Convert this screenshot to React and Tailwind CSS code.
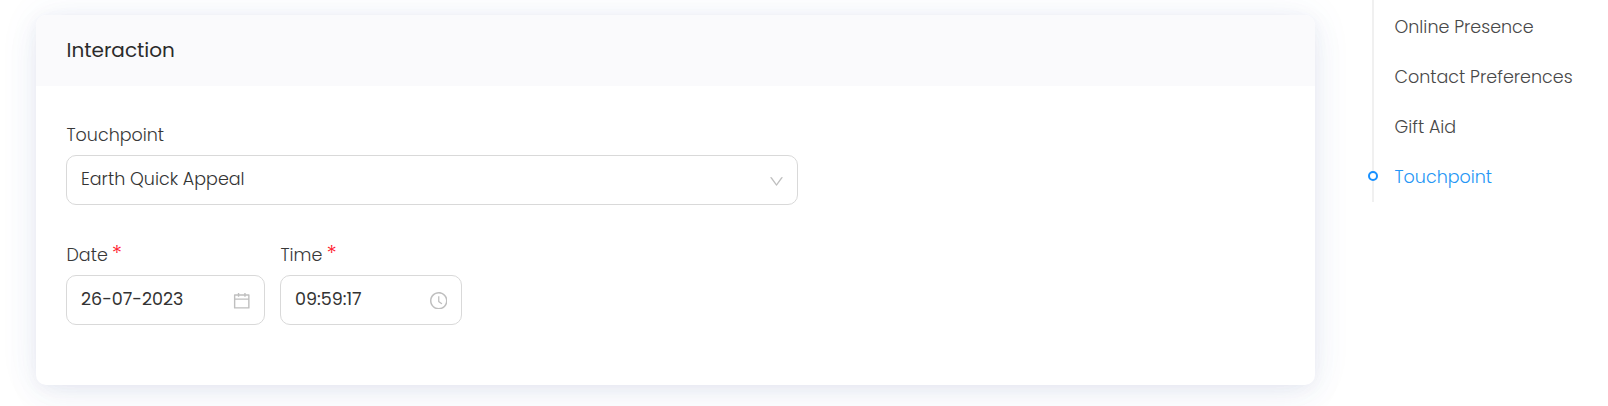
const links = [
  { label: 'Online Presence' },
  { label: 'Contact Preferences' },
  { label: 'Gift Aid' },
  { label: 'Touchpoint', active: true },
];

function DownIcon() {
  return (
    <svg className="h-[15px] w-[15px] text-[#bfbfbf]" viewBox="64 64 896 896" fill="currentColor">
      <path d="M884 256h-75c-5.100 0-9.900 2.500-12.900 6.600L512 654.200 227.900 262.600c-3-4.100-7.800-6.600-12.900-6.600h-75c-6.500 0-10.300 7.400-6.500 12.700l352.600 486.100c12.800 17.600 39 17.600 51.700 0l352.600-486.100c3.900-5.300.1-12.700-6.400-12.700z" />
    </svg>
  );
}

function CalendarIcon() {
  return (
    <svg className="h-[17.500px] w-[17.500px] text-[#bfbfbf]" viewBox="64 64 896 896" fill="currentColor">
      <path d="M880 184H712v-64c0-4.400-3.600-8-8-8h-56c-4.400 0-8 3.600-8 8v64H384v-64c0-4.400-3.600-8-8-8h-56c-4.400 0-8 3.600-8 8v64H144c-17.700 0-32 14.300-32 32v664c0 17.700 14.300 32 32 32h736c17.700 0 32-14.300 32-32V216c0-17.700-14.300-32-32-32zm-40 656H184V460h656v380zM184 392V256h128v48c0 4.400 3.600 8 8 8h56c4.400 0 8-3.600 8-8v-48h256v48c0 4.400 3.600 8 8 8h56c4.400 0 8-3.600 8-8v-48h128v136H184z" />
    </svg>
  );
}

function ClockIcon() {
  return (
    <svg className="h-[17.500px] w-[17.500px] text-[#bfbfbf]" viewBox="64 64 896 896" fill="currentColor">
      <path d="M512 64C264.600 64 64 264.600 64 512s200.600 448 448 448 448-200.600 448-448S759.400 64 512 64zm0 820c-205.400 0-372-166.600-372-372s166.600-372 372-372 372 166.600 372 372-166.600 372-372 372z" />
      <path d="M686.700 638.600L544.100 535.500V288c0-4.400-3.600-8-8-8H488c-4.400 0-8 3.600-8 8v275.400c0 2.600 1.200 5 3.300 6.500l165.400 120.600c3.600 2.600 8.600 1.800 11.200-1.700l28.600-39c2.600-3.700 1.800-8.700-1.800-11.200z" />
    </svg>
  );
}

function Field({ label, required, width, value, valueClass, iconClass, children }) {
  return (
    <div className={`flex flex-col ${width}`}>
      <div className="flex h-10 items-center pl-[0.500px] text-[17.500px] font-light text-[#383838]">
        <span>{label}</span>
        {required && <span className="-mt-[3px] ml-1 text-[22px] leading-none text-[#ff2030]">*</span>}
      </div>
      <div className="flex h-[50px] items-center justify-between rounded-[10px] border border-[#d9d9d9] bg-white pr-[14px] pl-[14px]">
        <span className={`-mt-0.5 text-[17.500px] ${valueClass}`}>{value}</span>
        <span className={iconClass}>{children}</span>
      </div>
    </div>
  );
}

export default function App() {
  return (
    <div className="flex h-[406px] items-start overflow-hidden bg-white font-[Poppins,Inter,sans-serif] whitespace-nowrap">
      <section className="mt-[15px] ml-9 h-[370px] w-[1279px] shrink-0 rounded-[10px] bg-white shadow-[0_0_40px_rgba(70,120,200,0.07),0_12px_36px_rgba(60,70,140,0.05),0_3px_14px_rgba(50,50,110,0.05)]">
        <header className="flex h-[71px] items-center rounded-t-[10px] bg-[#fafafc] pb-0.5 pl-[30.500px]">
          <h2 className="text-[20px] font-normal text-[#2b2b2b]">Interaction</h2>
        </header>
        <div className="flex flex-col gap-[30px] px-[30px] pt-[29px]">
          <Field label="Touchpoint" width="w-[732px]" value="Earth Quick Appeal" valueClass="font-light text-[#333]" iconClass="mt-[3px] -mr-[1px]">
            <DownIcon />
          </Field>
          <div className="flex gap-[15px]">
            <Field label="Date" required width="w-[199px]" value="26-07-2023" valueClass="font-normal text-[#333]" iconClass="mt-px">
              <CalendarIcon />
            </Field>
            <Field label="Time" required width="w-[182px]" value="09:59:17" valueClass="font-normal text-[#333]" iconClass="mt-px">
              <ClockIcon />
            </Field>
          </div>
        </div>
      </section>
      <nav className="ml-[57px] h-[202px] border-l-2 border-[#f0f0f0] pt-0.5">
        {links.map((link) => (
          <div key={link.label} className="relative flex h-[50px] items-center pl-[20.500px]">
            {link.active && (
              <span className="absolute top-[19px] -left-[6px] h-[10px] w-[10px] rounded-full border-2 border-[#1890ff] bg-white" />
            )}
            <a className={`text-[17.500px] font-light ${link.active ? 'text-[#2596f5]' : 'text-[#484848]'}`}>{link.label}</a>
          </div>
        ))}
      </nav>
    </div>
  );
}
